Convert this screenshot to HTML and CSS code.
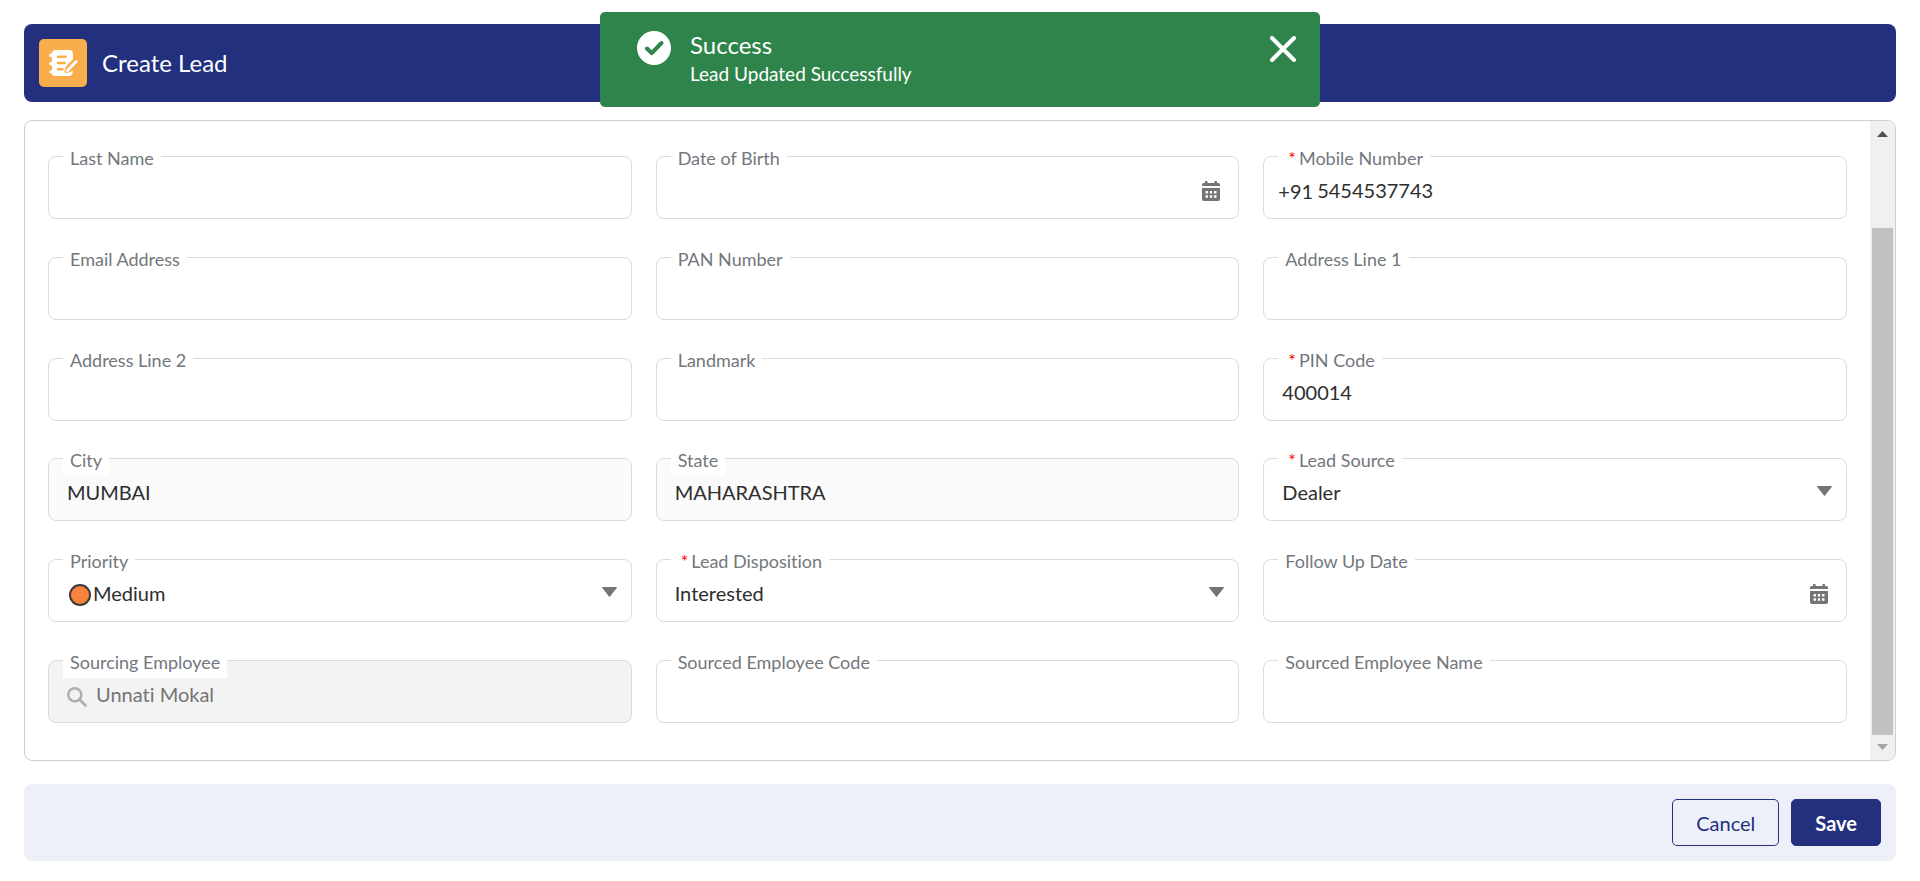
FILE: index.html
```html
<!DOCTYPE html>
<html lang="en">
<head>
<meta charset="utf-8">
<meta name="viewport" content="width=device-width, initial-scale=1">
<title>Create Lead</title>
<link rel="stylesheet" href="styles.css">
</head>
<body>
<svg class="sprite" aria-hidden="true">
  <symbol id="calendar" viewBox="0 0 20 20">
    <path fill="currentColor" d="M2.6 2H4V1a1 1 0 0 1 2.6 0v1h6.8V1A1 1 0 0 1 16 1v1h1.400a1.600 1.600 0 0 1 1.600 1.600V5H1V3.600A1.600 1.600 0 0 1 2.600 2z"/>
    <path fill="currentColor" fill-rule="evenodd" d="M1 7h18v11a2 2 0 0 1-2 2H3a2 2 0 0 1-2-2zM4.500 10v2.500H7V10zM8.800 10v2.500h2.400V10zM13 10v2.500h2.500V10zM4.500 14.300v2.500H7v-2.500zM8.800 14.300v2.500h2.400v-2.500zM13 14.300v2.500h2.500v-2.500z"/>
  </symbol>
  <symbol id="caret" viewBox="0 0 15 10">
    <path fill="currentColor" d="M0.500 0h14a.5.5 0 0 1 .4.800L8 9.600a.6.6 0 0 1-1 0L.1.800A.5.5 0 0 1 .5 0z"/>
  </symbol>
</svg>

<div class="toast" role="status">
  <svg class="toast-icon" viewBox="0 0 34 34" aria-hidden="true">
    <circle cx="17" cy="17" r="17" fill="#fff"/>
    <path d="M10 17.500l4.700 4.700L24.500 12" fill="none" stroke="#2e844a" stroke-width="4" stroke-linecap="round" stroke-linejoin="round"/>
  </svg>
  <div class="toast-body">
    <h2 class="toast-title">Success</h2>
    <p class="toast-text">Lead Updated Successfully</p>
  </div>
  <button class="toast-close" type="button" aria-label="Close">
    <svg viewBox="0 0 26 26" aria-hidden="true"><path d="M2 2l22 22M24 2L2 24" stroke="#fff" stroke-width="4" stroke-linecap="round"/></svg>
  </button>
</div>

<form class="page">
  <header class="header">
    <span class="header-icon">
      <svg viewBox="0 0 29 26" aria-hidden="true">
        <path fill="#fff" d="M6.500 0H20q4 0 4 4v5l-7 7.500-1.500 4.500q-.3 2 1.500 2l4-1 3-1.500q-.5 5.500-4 5.500H6.500Q3 26 3 23.500H2Q.3 23.300.3 21.800T2 20.200h1v-4.700H2Q.3 15.300.3 13.500T2 11.800h1V7.200H2Q.3 7 .3 5.200T2 3.500h1Q3 0 6.500 0z"/>
        <path d="M9 6.800h7.500M9 13h6.500M9 19.200h4.500" stroke="#f9ad4d" stroke-width="2.600" stroke-linecap="round"/>
        <path d="M27.500 11l-9 9.200" stroke="#f9ad4d" stroke-width="6.400"/>
        <path d="M27.200 11.500l-8 8.200" stroke="#fff" stroke-width="2.800" stroke-linecap="round"/>
        <path d="M16.800 22.500l1.100-4 2.700 2.600z" fill="#fff"/>
      </svg>
    </span>
    <h1 class="header-title">Create Lead</h1>
  </header>

  <main class="panel">
    <div class="fields">
      <div class="field"><label class="label" for="last">Last Name</label><input class="control" id="last" type="text"></div>
      <div class="field"><label class="label" for="dob">Date of Birth</label><input class="control" id="dob" type="text"><svg class="calendar" aria-hidden="true"><use href="#calendar"/></svg></div>
      <div class="field field-phone"><label class="label" for="mobile"><span class="required">*</span>Mobile Number</label><span class="prefix">+91</span><input class="control" id="mobile" type="text" value="5454537743"></div>

      <div class="field"><label class="label" for="email">Email Address</label><input class="control" id="email" type="text"></div>
      <div class="field"><label class="label" for="pan">PAN Number</label><input class="control" id="pan" type="text"></div>
      <div class="field"><label class="label" for="addr1">Address Line 1</label><input class="control" id="addr1" type="text"></div>

      <div class="field"><label class="label" for="addr2">Address Line 2</label><input class="control" id="addr2" type="text"></div>
      <div class="field"><label class="label" for="landmark">Landmark</label><input class="control" id="landmark" type="text"></div>
      <div class="field"><label class="label" for="pin"><span class="required">*</span>PIN Code</label><input class="control" id="pin" type="text" value="400014"></div>

      <div class="field field-readonly"><label class="label" for="city">City</label><input class="control" id="city" type="text" value="MUMBAI" readonly></div>
      <div class="field field-readonly"><label class="label" for="state">State</label><input class="control" id="state" type="text" value="MAHARASHTRA" readonly></div>
      <div class="field"><label class="label" for="source"><span class="required">*</span>Lead Source</label><select class="control" id="source"><option>Dealer</option></select><svg class="caret" aria-hidden="true"><use href="#caret"/></svg></div>

      <div class="field field-priority"><label class="label" for="priority">Priority</label><span class="dot"></span><select class="control" id="priority"><option>Medium</option></select><svg class="caret" aria-hidden="true"><use href="#caret"/></svg></div>
      <div class="field"><label class="label" for="disposition"><span class="required">*</span>Lead Disposition</label><select class="control" id="disposition"><option>Interested</option></select><svg class="caret" aria-hidden="true"><use href="#caret"/></svg></div>
      <div class="field"><label class="label" for="follow">Follow Up Date</label><input class="control" id="follow" type="text"><svg class="calendar" aria-hidden="true"><use href="#calendar"/></svg></div>

      <div class="field field-disabled"><label class="label" for="employee">Sourcing Employee</label><svg class="search" viewBox="0 0 20 20" aria-hidden="true"><circle cx="7.800" cy="7.800" r="6.500" fill="none" stroke="#aeaeae" stroke-width="2.400"/><path d="M12.500 12.500l6 6" stroke="#aeaeae" stroke-width="2.600" stroke-linecap="round"/></svg><input class="control" id="employee" type="text" value="Unnati Mokal" disabled></div>
      <div class="field"><label class="label" for="code">Sourced Employee Code</label><input class="control" id="code" type="text"></div>
      <div class="field"><label class="label" for="name">Sourced Employee Name</label><input class="control" id="name" type="text"></div>
    </div>
    <div class="scrollbar" aria-hidden="true">
      <svg class="scroll-arrow" viewBox="0 0 11 6"><path d="M0 6L5.500 0 11 6z" fill="#505050"/></svg>
      <span class="scroll-thumb"></span>
      <svg class="scroll-arrow" viewBox="0 0 11 6"><path d="M0 0h11L5.500 6z" fill="#a3a3a3"/></svg>
    </div>
  </main>

  <footer class="footer">
    <button class="button button-outline" type="button">Cancel</button>
    <button class="button button-solid" type="button">Save</button>
  </footer>
</form>
</body>
</html>
```
FILE: styles.css
```css
* {
  box-sizing: border-box;
}

body {
  margin: 0;
  background: #fff;
  color: #2e2e2e;
  font-family: Lato, "Liberation Sans", sans-serif;
  font-size: 20px;
  font-variant-ligatures: none;
  line-height: 24px;
}

.sprite {
  position: absolute;
  width: 0;
  height: 0;
}

.page {
  display: flex;
  flex-direction: column;
  min-height: 100vh;
  padding: 24px 24px 20px;
}

.header {
  display: flex;
  align-items: center;
  gap: 15px;
  padding: 15px;
  border-radius: 8px;
  background: #22307d;
}

.header-icon {
  display: grid;
  place-items: center;
  width: 48px;
  height: 48px;
  border-radius: 5px;
  background: #f9ad4d;
}

.header-icon svg {
  width: 29px;
  height: 26px;
}

.header-title {
  margin: 0;
  color: #fff;
  font-size: 24px;
  font-weight: 400;
}

/* Toast */

.toast {
  position: absolute;
  z-index: 2;
  top: 12px;
  right: 0;
  left: 0;
  display: flex;
  align-items: flex-start;
  width: 720px;
  max-width: 100%;
  margin: 0 auto;
  padding: 19px 24px 19px 37px;
  border-radius: 5px;
  background: #2e844a;
  color: #fff;
}

.toast-icon {
  width: 34px;
  height: 34px;
}

.toast-body {
  flex: 1;
  padding: 0 19px;
}

.toast-title {
  margin: 0;
  font-size: 24px;
  font-weight: 400;
  line-height: 28px;
}

.toast-text {
  margin: 0;
  font-size: 19px;
  line-height: 29px;
}

.toast-close {
  width: 26px;
  height: 26px;
  margin-top: 5px;
  padding: 0;
  border: 0;
  background: none;
}

.toast-close svg {
  display: block;
}

/* Form panel */

.panel {
  display: flex;
  flex: 1;
  margin: 18px 0 23px;
  overflow: hidden;
  border: 1px solid #cfcfcf;
  border-radius: 8px;
}

.fields {
  display: grid;
  flex: 1;
  grid-template-columns: repeat(3, 1fr);
  column-gap: 24px;
  row-gap: 24px;
  align-content: space-between;
  padding: 35px 23px 37px;
}

.field {
  position: relative;
  display: flex;
  border: 1px solid #dddbda;
  border-radius: 8px;
  background: #fff;
}

.label {
  position: absolute;
  top: -15px;
  left: 14px;
  padding: 4px 7px;
  background: #fff;
  color: #72777d;
  font-size: 18px;
}

.required {
  margin: 0 3px;
  color: #f00;
}

.control {
  flex: 1;
  min-width: 0;
  padding: 21px 48px 16px 18px;
  border: 0;
  border-radius: 8px;
  outline: 0;
  appearance: none;
  background: transparent;
  color: #2e2e2e;
  font: inherit;
  font-variant-ligatures: none;
  opacity: 1;
}

.prefix {
  padding: 22px 0 15px 14px;
}

.field-phone .control {
  padding-left: 4px;
}

.dot {
  width: 22px;
  height: 22px;
  margin: 24px 0 15px 20px;
  border: 2px solid #3d3a3a;
  border-radius: 50%;
  background: #fa833d;
}

.field-priority .control {
  padding-left: 2px;
}

.field-readonly {
  background: #fafafa;
}

.field-disabled {
  background: #f3f3f3;
}

.search {
  width: 20px;
  height: 20px;
  margin: 26px 0 15px 18px;
}

.field-disabled .control {
  padding-left: 9px;
  color: #747474;
}

.calendar {
  position: absolute;
  top: 24px;
  right: 17px;
  width: 20px;
  height: 20px;
  color: #747474;
}

.caret {
  position: absolute;
  top: 27px;
  right: 14px;
  width: 15px;
  height: 10px;
  color: #747474;
  pointer-events: none;
}

/* Scrollbar */

.scrollbar {
  display: flex;
  flex-direction: column;
  align-items: center;
  width: 25px;
  padding: 10px 2px;
  background: #f0f0f0;
}

.scroll-arrow {
  width: 11px;
  height: 6px;
}

.scroll-thumb {
  flex: 1;
  width: 21px;
  margin: 91px 0 9px;
  background: #c1c1c1;
}

/* Footer */

.footer {
  display: flex;
  justify-content: flex-end;
  gap: 12px;
  padding: 15px;
  border-radius: 8px;
  background: #edf0f9;
}

.button {
  padding: 11px 23px 10px;
  border: 1px solid #22307d;
  border-radius: 5px;
  font: inherit;
}

.button-outline {
  background: transparent;
  color: #22307d;
}

.button-solid {
  background: #22307d;
  color: #fff;
  font-weight: 700;
}
```
